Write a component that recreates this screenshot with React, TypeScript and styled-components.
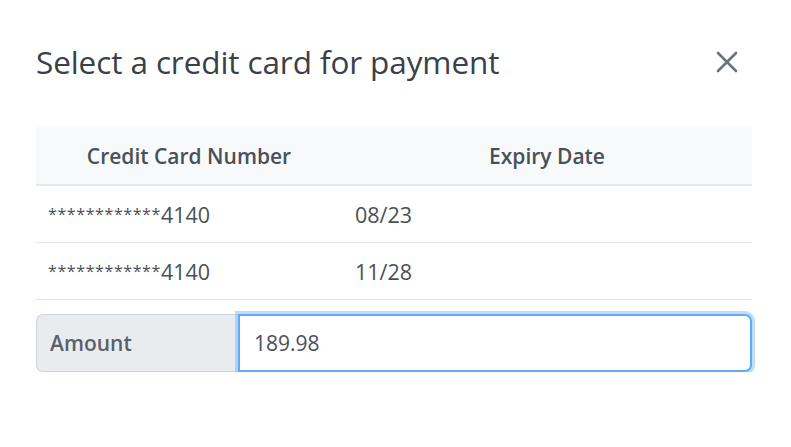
import styled, { createGlobalStyle } from "styled-components";

interface CardRow {
  id: number;
  last4: string;
  expiry: string;
}

const cards: CardRow[] = [
  { id: 1, last4: "4140", expiry: "08/23" },
  { id: 2, last4: "4140", expiry: "11/28" },
];

const GlobalStyle = createGlobalStyle`
  body {
    margin: 0;
    background: #ffffff;
    font-family: "Open Sans", "Noto Sans", sans-serif;
    color: #495057;
  }
`;

const App = () => {
  return (
    <>
      <GlobalStyle />
      <Modal>
        <Header>
          <Title>Select a credit card for payment</Title>
          <CloseButton aria-label="Close">
            <svg width="22" height="22" viewBox="0 0 22 22">
              <path
                d="M2 2 L20 20 M20 2 L2 20"
                stroke="#6c737a"
                strokeWidth="2.6"
                strokeLinecap="round"
              />
            </svg>
          </CloseButton>
        </Header>
        <Table>
          <colgroup>
            <col style={{ width: 306 }} />
            <col />
          </colgroup>
          <thead>
            <tr>
              <Th>Credit Card Number</Th>
              <Th>Expiry Date</Th>
            </tr>
          </thead>
          <tbody>
            {cards.map((card) => (
              <tr key={card.id}>
                <Td>
                  <Mask>************</Mask>
                  {card.last4}
                </Td>
                <Td>{card.expiry}</Td>
              </tr>
            ))}
          </tbody>
        </Table>
        <InputGroup>
          <GroupLabel>Amount</GroupLabel>
          <AmountInput defaultValue="189.98" autoFocus />
        </InputGroup>
      </Modal>
    </>
  );
};

export default App;

const Modal = styled.div`
  width: 716px;
  padding: 0 39px 0 36px;
`;

const Header = styled.div`
  display: flex;
  align-items: center;
  justify-content: space-between;
  height: 127px;
  box-sizing: border-box;
`;

const Title = styled.h4`
  margin: 0 0 4px 0;
  font-size: 31.5px;
  font-weight: 500;
  color: #3a4148;
  letter-spacing: -0.1px;
`;

const CloseButton = styled.button`
  border: none;
  background: none;
  padding: 0;
  margin: 0 14px 4px 0;
  display: flex;
  cursor: pointer;
`;

const Table = styled.table`
  width: 100%;
  table-layout: fixed;
  border-collapse: collapse;
  font-size: 21.5px;
`;

const Th = styled.th`
  height: 57px;
  background: #f8f9fa;
  border-bottom: 2px solid #e6e9ec;
  font-size: 21px;
  font-weight: 600;
  color: #495057;
  text-align: center;
  padding: 0;
`;

const Td = styled.td`
  height: 56px;
  padding: 0 12px;
  border-bottom: 1px solid #e3e6e9;
  color: #495057;
  &:nth-child(2) {
    padding-left: 13px;
  }
`;

const Mask = styled.span`
  font-size: 16px;
  letter-spacing: 0.6px;
  vertical-align: 3px;
`;

const InputGroup = styled.div`
  display: flex;
  margin-top: 14px;
  height: 58px;
`;

const GroupLabel = styled.span`
  display: flex;
  align-items: center;
  width: 202px;
  box-sizing: border-box;
  padding: 0 13px;
  background: #e9ecef;
  border: 1px solid #ced4da;
  border-right: none;
  border-radius: 7px 0 0 7px;
  font-size: 21px;
  font-weight: 600;
  color: #5a6168;
`;

const AmountInput = styled.input`
  flex: 1;
  min-width: 0;
  box-sizing: border-box;
  border: 2px solid #5eacf3;
  border-radius: 0 7px 7px 0;
  padding: 0 14px;
  font-family: inherit;
  font-size: 21px;
  color: #495057;
  outline: none;
  box-shadow: 0 0 0 3px rgba(100, 170, 245, 0.4);
  caret-color: #222;
`;
